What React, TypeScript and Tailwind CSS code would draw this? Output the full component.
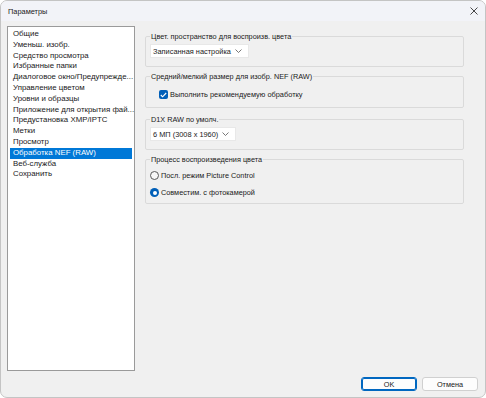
import React from "react";

const items = [
  "Общие",
  "Уменьш. изобр.",
  "Средство просмотра",
  "Избранные папки",
  "Диалоговое окно/Предупрежде...",
  "Управление цветом",
  "Уровни и образцы",
  "Приложение для открытия фай...",
  "Предустановка XMP/IPTC",
  "Метки",
  "Просмотр",
  "Обработка NEF (RAW)",
  "Веб-служба",
  "Сохранить",
];

function Chevron() {
  return (
    <svg width="7" height="4" viewBox="0 0 7 4" className="shrink-0">
      <polyline points="0.5,0.5 3.5,3.5 6.5,0.5" fill="none" stroke="#555" strokeWidth="0.8" />
    </svg>
  );
}

function Select({ text, w }: { text: string; w: string }) {
  return (
    <div className={`flex h-[14px] items-center justify-between bg-white pl-[2px] pr-[6px] border border-[#e8e8e8] whitespace-nowrap text-[7.4px] ${w}`}>
      <span>{text}</span>
      <Chevron />
    </div>
  );
}

function Group({ title, h, className, children }: { title: string; h: string; className?: string; children?: React.ReactNode }) {
  return (
    <fieldset className={`border border-[#dadada] rounded-[2px] px-[4px] m-0 min-w-0 ${h} ${className ?? ""}`}>
      <legend className="px-[1px] leading-[11px] text-[7.3px] whitespace-nowrap">{title}</legend>
      {children}
    </fieldset>
  );
}

export default function App() {
  return (
    <div
      className="w-[486px] h-[398px] flex flex-col bg-[#f0f0f0] border border-[#c4c4c4] rounded-[7px] overflow-hidden text-[8px] leading-[11px] text-[#1a1a1a]"
      style={{ fontFamily: '"Liberation Sans", Arial, sans-serif' }}
    >
      {/* title bar */}
      <div className="h-[20px] shrink-0 flex items-center justify-between bg-[#f2f3f8] pl-[7px] pr-[7px]">
        <span className="text-[7.4px]">Параметры</span>
        <svg width="8" height="8" viewBox="0 0 8 8">
          <path d="M0.5 0.5 L7.5 7.5 M7.5 0.5 L0.5 7.5" stroke="#333" strokeWidth="0.9" />
        </svg>
      </div>

      {/* body */}
      <div className="flex-1 flex flex-col">
        <div className="flex pl-[6px] pt-[5px]">
          {/* list */}
          <div className="w-[128px] h-[345px] bg-white border border-[#9a9a9a] pt-[2px] px-[2px] text-[7.85px]">
            {items.map((it) => (
              <div
                key={it}
                className={`h-[10.8px] leading-[10.8px] pl-[3px] whitespace-nowrap ${
                  it === "Обработка NEF (RAW)" ? "bg-[#0078d7] text-white" : ""
                }`}
              >
                {it}
              </div>
            ))}
          </div>

          {/* groups */}
          <div className="ml-[10px] mt-[5px] w-[319px] flex flex-col">
            <Group title="Цвет. пространство для воспроизв. цвета" h="h-[36px]">
              <div className="mt-[2px]">
                <Select text="Записанная настройка" w="w-[99px]" />
              </div>
            </Group>

            <Group title="Средний/мелкий размер для изобр. NEF (RAW)" h="h-[37px]" className="mt-[4px]">
              <div className="flex items-center mt-[7px] pl-[9px]">
                <div className="w-[9px] h-[9px] rounded-[2px] bg-[#005fb8] flex items-center justify-center shrink-0">
                  <svg width="7" height="6" viewBox="0 0 7 6">
                    <polyline points="0.8,3 2.6,4.8 6.2,1" fill="none" stroke="white" strokeWidth="1.1" />
                  </svg>
                </div>
                <span className="ml-[2px] text-[7.4px] whitespace-nowrap">Выполнить рекомендуемую обработку</span>
              </div>
            </Group>

            <Group title="D1X RAW по умолч." h="h-[36px]" className="mt-[6px]">
              <div className="mt-[2px]">
                <Select text="6 МП (3008 x 1960)" w="w-[86px]" />
              </div>
            </Group>

            <Group title="Процесс воспроизведения цвета" h="h-[50px]" className="mt-[4px]">
              <div className="flex items-center mt-[5px] text-[7.3px]">
                <div className="w-[9px] h-[9px] rounded-full border border-[#5a5a5a] bg-[#f7f7f7] shrink-0" />
                <span className="ml-[2px]">Посл. режим Picture Control</span>
              </div>
              <div className="flex items-center mt-[6px] text-[7.3px]">
                <div className="w-[9px] h-[9px] rounded-full bg-[#005fb8] flex items-center justify-center shrink-0">
                  <div className="w-[4px] h-[4px] rounded-full bg-white" />
                </div>
                <span className="ml-[2px]">Совместим. с фотокамерой</span>
              </div>
            </Group>
          </div>
        </div>

        {/* buttons */}
        <div className="flex justify-end gap-[5px] pr-[7px] mt-[6px]">
          <button className="w-[56px] h-[14px] flex items-center justify-center bg-[#fdfdfd] border border-[#0067c0] rounded-[3px] outline outline-1 outline-[#0067c0] -outline-offset-2 text-[7.3px]">
            OK
          </button>
          <button className="w-[56px] h-[14px] flex items-center justify-center bg-[#fdfdfd] border border-[#d0d0d0] rounded-[3px] text-[7.3px]">
            Отмена
          </button>
        </div>
      </div>
    </div>
  );
}
